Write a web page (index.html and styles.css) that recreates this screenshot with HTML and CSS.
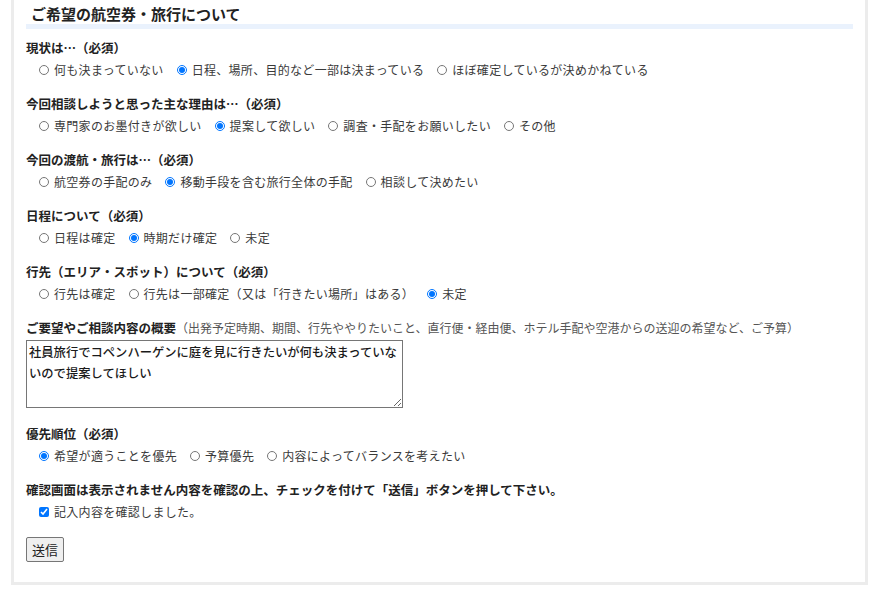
FILE: index.html
```html
<!DOCTYPE html>
<html lang="ja">
<head>
<meta charset="utf-8">
<title>ご希望の航空券・旅行について</title>
<link rel="stylesheet" href="styles.css">
</head>
<body>
<div class="card">
  <h2 class="sec-title">ご希望の航空券・旅行について</h2>

  <div class="group">
    <div class="label">現状は…（必須）</div>
    <div class="opts">
      <label class="opt"><input type="radio" name="q1">何も決まっていない</label>
      <label class="opt"><input type="radio" name="q1" checked>日程、場所、目的など一部は決まっている</label>
      <label class="opt"><input type="radio" name="q1">ほぼ確定しているが決めかねている</label>
    </div>
  </div>

  <div class="group">
    <div class="label">今回相談しようと思った主な理由は…（必須）</div>
    <div class="opts">
      <label class="opt"><input type="radio" name="q2">専門家のお墨付きが欲しい</label>
      <label class="opt"><input type="radio" name="q2" checked>提案して欲しい</label>
      <label class="opt"><input type="radio" name="q2">調査・手配をお願いしたい</label>
      <label class="opt"><input type="radio" name="q2">その他</label>
    </div>
  </div>

  <div class="group">
    <div class="label">今回の渡航・旅行は…（必須）</div>
    <div class="opts">
      <label class="opt"><input type="radio" name="q3">航空券の手配のみ</label>
      <label class="opt"><input type="radio" name="q3" checked>移動手段を含む旅行全体の手配</label>
      <label class="opt"><input type="radio" name="q3">相談して決めたい</label>
    </div>
  </div>

  <div class="group">
    <div class="label">日程について（必須）</div>
    <div class="opts">
      <label class="opt"><input type="radio" name="q4">日程は確定</label>
      <label class="opt"><input type="radio" name="q4" checked>時期だけ確定</label>
      <label class="opt"><input type="radio" name="q4">未定</label>
    </div>
  </div>

  <div class="group">
    <div class="label">行先（エリア・スポット）について（必須）</div>
    <div class="opts">
      <label class="opt"><input type="radio" name="q5">行先は確定</label>
      <label class="opt"><input type="radio" name="q5">行先は一部確定（又は「行きたい場所」はある）</label>
      <label class="opt"><input type="radio" name="q5" checked>未定</label>
    </div>
  </div>

  <div class="group group-text">
    <div class="label">ご要望やご相談内容の概要<span class="note">（出発予定時期、期間、行先ややりたいこと、直行便・経由便、ホテル手配や空港からの送迎の希望など、ご予算）</span></div>
    <textarea class="memo">社員旅行でコペンハーゲンに庭を見に行きたいが何も決まっていないので提案してほしい</textarea>
  </div>

  <div class="group">
    <div class="label">優先順位（必須）</div>
    <div class="opts">
      <label class="opt"><input type="radio" name="q7" checked>希望が適うことを優先</label>
      <label class="opt"><input type="radio" name="q7">予算優先</label>
      <label class="opt"><input type="radio" name="q7">内容によってバランスを考えたい</label>
    </div>
  </div>

  <div class="group group-last">
    <div class="label">確認画面は表示されません内容を確認の上、チェックを付けて「送信」ボタンを押して下さい。</div>
    <div class="opts">
      <label class="opt"><input type="checkbox" checked>記入内容を確認しました。</label>
    </div>
  </div>

  <button class="submit" type="button">送信</button>
</div>
</body>
</html>
```

FILE: styles.css
```css
html, body {
  margin: 0;
  padding: 0;
  background: #fff;
}

body {
  font-family: "Noto Sans CJK JP", "Noto Sans", sans-serif;
  color: #222;
}

.card {
  margin: 0 10px 0 11px;
  border: 3px solid #ececec;
  border-top: none;
  padding: 0 12px 20px 12px;
  width: 827px;
}

.sec-title {
  margin: 0;
  padding: 5px 0 1px 5px;
  font-size: 15px;
  line-height: 18px;
  font-weight: 700;
  color: #222;
  border-bottom: 5px solid #eaf2fd;
}

.group {
  margin-top: 9px;
  margin-bottom: 14px;
}

.group + .group {
  margin-top: 0;
}

.label {
  font-size: 12.5px;
  line-height: 20px;
  font-weight: 700;
  color: #222;
}

.note {
  font-weight: 400;
  font-size: 12px;
  color: #555;
}

.opts {
  margin-top: 2px;
  padding-left: 13px;
  display: flex;
  gap: 13px;
  font-size: 12px;
  line-height: 20px;
  letter-spacing: 0.3px;
  color: #3a3a3a;
}

.opt {
  display: flex;
  align-items: center;
  white-space: nowrap;
}

.opt input {
  width: 10px;
  height: 10px;
  margin: 0 5px 0 0;
}

.memo {
  display: block;
  margin: 2px 0 0 0;
  box-sizing: border-box;
  width: 377px;
  height: 68px;
  padding: 1px 2px;
  border: 1px solid #767676;
  border-radius: 0;
  font-family: "Noto Sans CJK JP", sans-serif;
  font-size: 12.3px;
  line-height: 21px;
  font-weight: 500;
  color: #1a1a1a;
  resize: both;
}

.group-text {
  margin-bottom: 16px;
}

.group-last {
  margin-bottom: 15px;
}

.submit {
  display: block;
  box-sizing: border-box;
  width: 38px;
  height: 25px;
  padding: 0;
  font-family: "Noto Sans CJK JP", sans-serif;
  font-size: 13px;
  color: #222;
  background: #efefef;
  border: 1px solid #767676;
  border-radius: 2px;
}
```
